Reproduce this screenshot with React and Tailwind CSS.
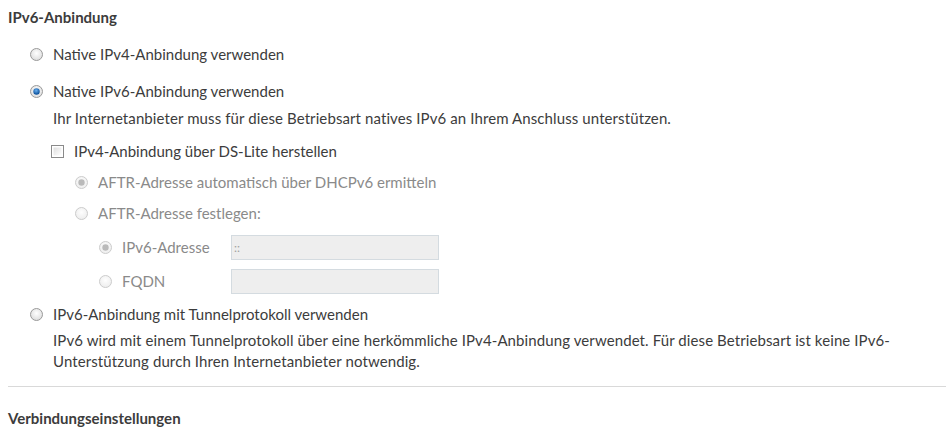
import React from 'react';

const Radio = ({ checked, disabled }) => (
  <svg width="13" height="13" viewBox="0 0 13 13" className={`shrink-0 ${disabled ? 'opacity-50' : ''}`}>
    <defs>
      <radialGradient id="rg" cx="50%" cy="40%" r="60%">
        <stop offset="0%" stopColor="#ffffff" />
        <stop offset="100%" stopColor="#dcdcdc" />
      </radialGradient>
      <radialGradient id="rb" cx="45%" cy="35%" r="60%">
        <stop offset="0%" stopColor="#6ab0f0" />
        <stop offset="100%" stopColor="#0a4f9a" />
      </radialGradient>
    </defs>
    <circle cx="6.5" cy="6.5" r="6" fill="url(#rg)" stroke="#9a9a9a" strokeWidth="1" />
    {checked && <circle cx="6.5" cy="6.5" r="3.2" fill={disabled ? '#777' : 'url(#rb)'} />}
  </svg>
);

const Checkbox = () => (
  <svg width="13" height="13" viewBox="0 0 13 13" className="shrink-0">
    <defs>
      <linearGradient id="cg" x1="0" y1="0" x2="1" y2="1">
        <stop offset="0%" stopColor="#dedede" />
        <stop offset="100%" stopColor="#ffffff" />
      </linearGradient>
    </defs>
    <rect x="0.5" y="0.5" width="12" height="12" fill="#fff" stroke="#8a8a8a" />
    <rect x="2.5" y="2.5" width="8" height="8" fill="url(#cg)" />
  </svg>
);

const RadioRow = ({ checked, disabled, children, className = '' }) => (
  <label className={`flex items-center gap-[10px] ${disabled ? 'text-[#8a8a8a]' : 'text-[#3c3c3c]'} ${className}`}>
    <Radio checked={checked} disabled={disabled} />
    <span>{children}</span>
  </label>
);

const App = () => {
  return (
    <div className="w-[946px] h-[434px] bg-white text-[15px] leading-[21px] text-[#3c3c3c] overflow-hidden" style={{ fontFamily: 'Lato, "Open Sans", sans-serif' }}>
      <div className="pl-2 pt-[7px]">
        <h2 className="font-bold">IPv6-Anbindung</h2>

        <div className="pl-[22px] pt-[16px]">
          <RadioRow>Native IPv4-Anbindung verwenden</RadioRow>

          <RadioRow checked className="mt-[16px]">Native IPv6-Anbindung verwenden</RadioRow>
          <div className="pl-[23px]">
            <p className="mt-[6px] tracking-[0.1px]">Ihr Internetanbieter muss für diese Betriebsart natives IPv6 an Ihrem Anschluss unterstützen.</p>

            <label className="flex items-center gap-[10px] mt-[12px] -ml-[2px]">
              <Checkbox />
              <span>IPv4-Anbindung über DS-Lite herstellen</span>
            </label>

            <div className="pl-[22px]">
              <RadioRow checked disabled className="mt-[10px]">AFTR-Adresse automatisch über DHCPv6 ermitteln</RadioRow>
              <RadioRow disabled className="mt-[10px]">AFTR-Adresse festlegen:</RadioRow>

              <div className="pl-[24px] mt-[11px] flex flex-col gap-[9px]">
                <div className="flex items-center">
                  <RadioRow checked disabled className="w-[132px]">IPv6-Adresse</RadioRow>
                  <div className="w-[208px] h-[25px] bg-[#eeeeee] border border-[#d4dbe0] px-[2px] text-[12px] leading-[23px] text-[#a0a0a0]">::</div>
                </div>
                <div className="flex items-center">
                  <RadioRow disabled className="w-[132px]">FQDN</RadioRow>
                  <div className="w-[208px] h-[25px] bg-[#eeeeee] border border-[#d4dbe0]" />
                </div>
              </div>
            </div>
          </div>

          <RadioRow className="mt-[10px]">IPv6-Anbindung mit Tunnelprotokoll verwenden</RadioRow>
          <p className="pl-[23px] mt-[5px] pr-[40px] tracking-[0.1px]">IPv6 wird mit einem Tunnelprotokoll über eine herkömmliche IPv4-Anbindung verwendet. Für diese Betriebsart ist keine IPv6-Unterstützung durch Ihren Internetanbieter notwendig.</p>
        </div>

        <hr className="mt-[14px] border-t border-[#d9d9d9]" />

        <h2 className="font-bold mt-[21px]">Verbindungseinstellungen</h2>
      </div>
    </div>
  );
};

export default App;
